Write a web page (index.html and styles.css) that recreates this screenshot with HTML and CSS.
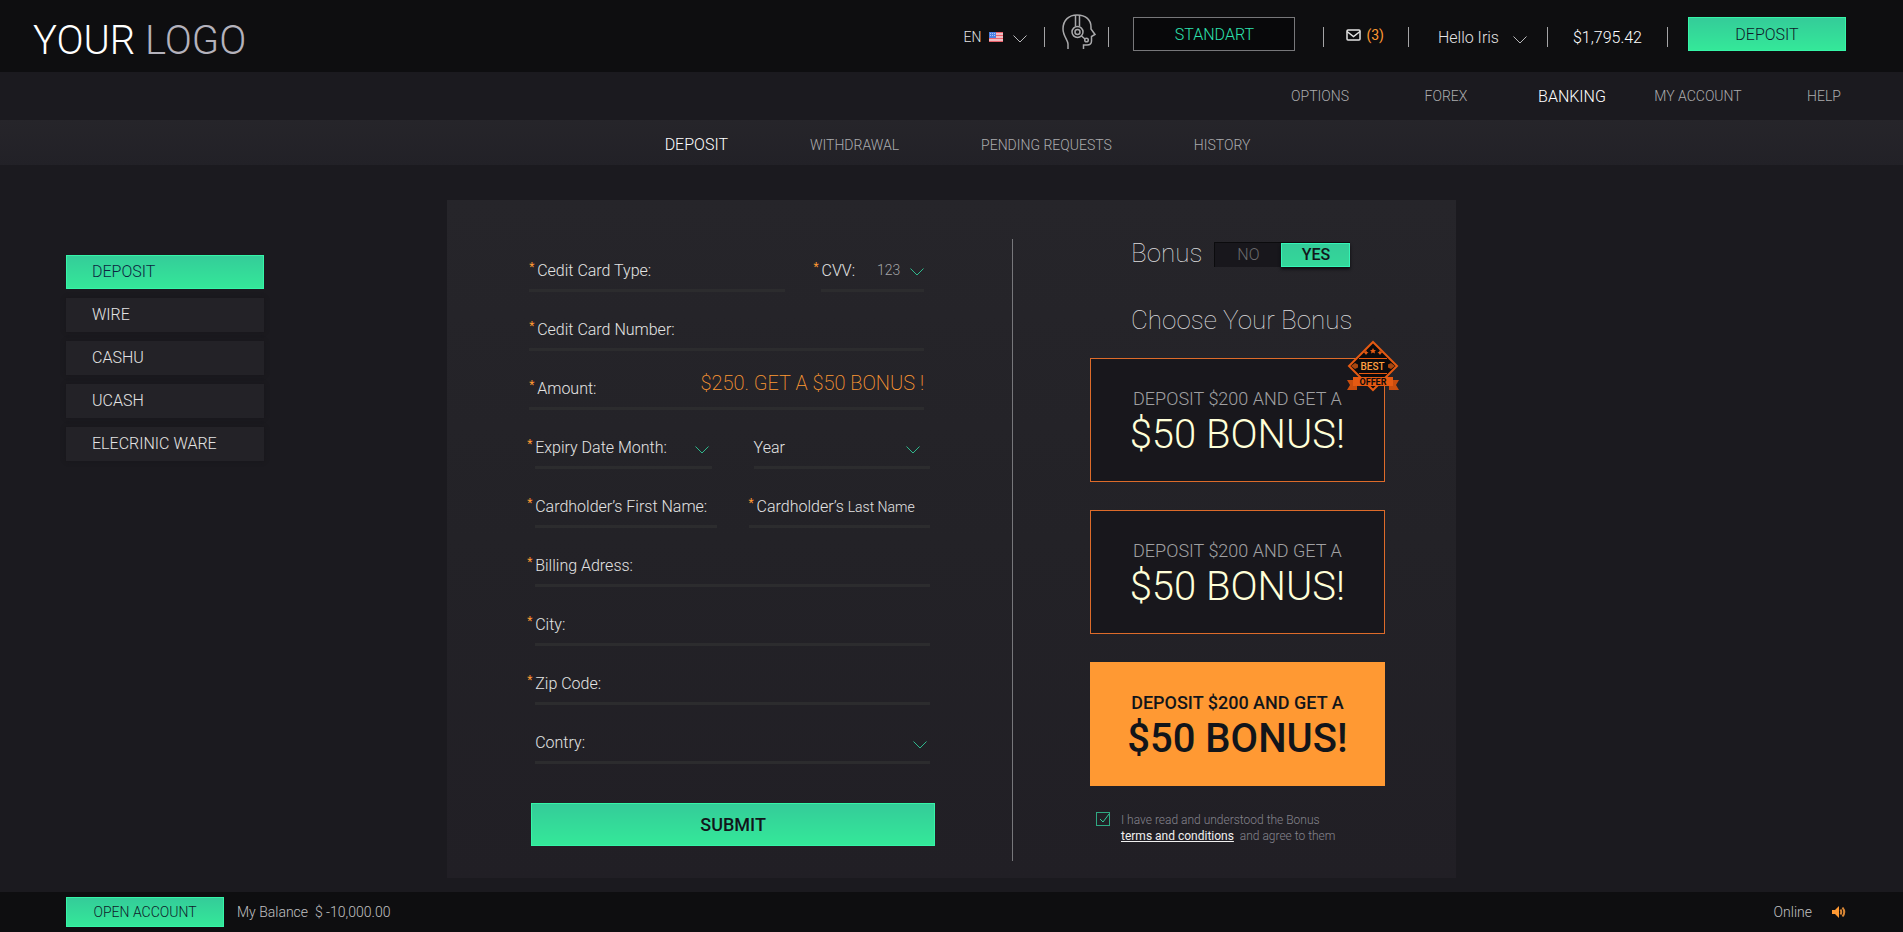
FILE: index.html
```html
<!DOCTYPE html>
<html lang="en">
<head>
    <meta charset="UTF-8">
    <meta name="viewport" content="width=device-width, initial-scale=1.0">
    <title>Banking - Deposit</title>
    <link rel="stylesheet" href="styles.css">
</head>
<body>
    <header class="top-bar">
        <a href="#" class="logo">YOUR <span>LOGO</span></a>
        <div class="top-actions">
            <button type="button" class="lang">
                EN
                <svg class="flag" viewBox="0 0 14 10" width="14" height="10">
                    <rect width="14" height="10" fill="#f3d9dc"/>
                    <path d="M0 .5h14M0 3.5h14M0 6.5h14M0 9.5h14" stroke="#e8606a" stroke-width="1.5"/>
                    <rect width="7" height="6" fill="#4a7fe0"/>
                    <path d="M1 1.5h5M1 3.5h5" stroke="#a9c4f5" stroke-dasharray="1 1"/>
                </svg>
                <svg class="chevron" viewBox="0 0 14 8" width="14" height="8"><path d="M.5.5 7 7 13.5.5"/></svg>
            </button>
            <span class="sep"></span>
            <a href="#" class="support" aria-label="Support">
                <svg viewBox="0 0 34 36" width="34" height="36" fill="none" stroke="#a9a9ab" stroke-width="1.5">
                    <path d="M6 35V30C6 26 1 22 1 15 1 6 7 1 15 1 24 1 29 6 29 13V15L33 20.5 29.5 22.5V27C29.5 30 28 31 25 31H21.5V35"/>
                    <path d="M13.5 1V12.5M17.5 1V12.5"/>
                    <circle cx="15.5" cy="18" r="5.5"/>
                    <circle cx="15.5" cy="18" r="2.5"/>
                    <path d="M19.5 22 23 25"/>
                    <circle cx="24.5" cy="26" r="1.8"/>
                </svg>
            </a>
            <span class="sep"></span>
            <button type="button" class="account-type">STANDART</button>
            <span class="sep"></span>
            <a href="#" class="messages">
                <svg viewBox="0 0 15 12" width="15" height="12" fill="none" stroke="#e4e4e4" stroke-width="1.5">
                    <rect x="1" y="1" width="13" height="10" rx="1"/>
                    <path d="M1 2.5 7.5 7.5 14 2.5"/>
                </svg>
                (3)
            </a>
            <span class="sep"></span>
            <button type="button" class="user">
                Hello Iris
                <svg class="chevron" viewBox="0 0 14 8" width="14" height="8"><path d="M.5.5 7 7 13.5.5"/></svg>
            </button>
            <span class="sep"></span>
            <span class="balance">$1,795.42</span>
            <span class="sep"></span>
            <button type="button" class="btn btn-deposit">DEPOSIT</button>
        </div>
    </header>

    <nav class="main-nav">
        <a href="#">OPTIONS</a>
        <a href="#">FOREX</a>
        <a href="#" class="active">BANKING</a>
        <a href="#">MY ACCOUNT</a>
        <a href="#">HELP</a>
    </nav>

    <nav class="sub-nav">
        <a href="#" class="active">DEPOSIT</a>
        <a href="#">WITHDRAWAL</a>
        <a href="#">PENDING REQUESTS</a>
        <a href="#">HISTORY</a>
    </nav>

    <main class="content">
        <aside class="sidebar">
            <a href="#" class="active">DEPOSIT</a>
            <a href="#">WIRE</a>
            <a href="#">CASHU</a>
            <a href="#">UCASH</a>
            <a href="#">ELECRINIC WARE</a>
        </aside>

        <section class="panel">
            <form class="deposit-form" onsubmit="return false">
                <!-- Card -->
                <div class="card-fields">
                    <div class="row row-type">
                        <div class="field required">
                            <label for="cardType">Cedit Card Type:</label>
                            <input type="text" id="cardType">
                        </div>
                        <div class="field required hang">
                            <label for="cvv">CVV:</label>
                            <select id="cvv" class="cvv"><option>123</option></select>
                        </div>
                    </div>
                    <div class="row">
                        <div class="field required">
                            <label for="cardNumber">Cedit Card Number:</label>
                            <input type="text" id="cardNumber">
                        </div>
                    </div>
                    <div class="row">
                        <div class="field required">
                            <label for="amount">Amount:</label>
                            <input type="text" id="amount" class="amount" value="$250. GET A $50 BONUS !">
                        </div>
                    </div>
                </div>

                <!-- Holder -->
                <div class="holder-fields">
                    <div class="row row-expiry">
                        <div class="field required hang">
                            <label for="month">Expiry Date Month:</label>
                            <select id="month"><option></option></select>
                        </div>
                        <div class="field">
                            <label for="year">Year</label>
                            <select id="year" class="year"><option></option></select>
                        </div>
                    </div>
                    <div class="row row-name">
                        <div class="field required hang">
                            <label for="firstName">Cardholder’s First Name:</label>
                            <input type="text" id="firstName">
                        </div>
                        <div class="field required">
                            <label for="lastName">Cardholder’s <small>Last Name</small></label>
                            <input type="text" id="lastName">
                        </div>
                    </div>
                    <div class="row">
                        <div class="field required hang">
                            <label for="address">Billing Adress:</label>
                            <input type="text" id="address">
                        </div>
                    </div>
                    <div class="row">
                        <div class="field required hang">
                            <label for="city">City:</label>
                            <input type="text" id="city">
                        </div>
                    </div>
                    <div class="row">
                        <div class="field required hang">
                            <label for="zip">Zip Code:</label>
                            <input type="text" id="zip">
                        </div>
                    </div>
                    <div class="row">
                        <div class="field">
                            <label for="country">Contry:</label>
                            <select id="country"><option></option></select>
                        </div>
                    </div>
                </div>

                <button type="submit" class="btn btn-submit">SUBMIT</button>
            </form>

            <div class="bonus">
                <div class="bonus-switch">
                    <h2>Bonus</h2>
                    <div class="toggle">
                        <input type="radio" name="bonus" id="bonusNo"><label for="bonusNo">NO</label>
                        <input type="radio" name="bonus" id="bonusYes" checked><label for="bonusYes">YES</label>
                    </div>
                </div>
                <h2>Choose Your Bonus</h2>
                <div class="bonus-list">
                    <button type="button" class="bonus-card">
                        <span>DEPOSIT $200 AND GET A</span>
                        <strong>$50 BONUS!</strong>
                        <svg class="badge" viewBox="0 0 54 52" width="54" height="52">
                            <path d="M27 2 51 26 27 50 3 26Z" fill="#0b0a0c" stroke="#e55a12" stroke-width="2"/>
                            <path d="M13 18.5H41M13 33.5H41" stroke="#e55a12"/>
                            <path d="M27 8l1 2h2l-1.5 1.5.5 2-2-1-2 1 .5-2L24 10h2ZM20 10l1 2 1.5.5-1.5 1-1 1.5-1-1.5-1.5-1L19 12ZM34 10l1 2 1.5.5-1.5 1-1 1.5-1-1.5-1.5-1L33 12Z" fill="#e55a12"/>
                            <path d="M5 26l4-3 3 1.5v3L9 29ZM49 26l-4-3-3 1.5v3L45 29Z" fill="#a8460f"/>
                            <path d="M1 40H11V50H1L4 45ZM53 40H43V50H53L50 45Z" fill="#c94d0e"/>
                            <path d="M7 37H47V46H7Z" fill="#e55a12"/>
                            <text x="26.5" y="30" class="badge-best">BEST</text>
                            <text x="27" y="45" class="badge-offer">OFFER</text>
                        </svg>
                    </button>
                    <button type="button" class="bonus-card">
                        <span>DEPOSIT $200 AND GET A</span>
                        <strong>$50 BONUS!</strong>
                    </button>
                    <button type="button" class="bonus-card selected">
                        <span>DEPOSIT $200 AND GET A</span>
                        <strong>$50 BONUS!</strong>
                    </button>
                </div>
                <div class="terms">
                    <input type="checkbox" id="terms" checked>
                    <label for="terms">I have read and understood the Bonus<br><a href="#">terms and conditions</a>&nbsp; and agree to them</label>
                </div>
            </div>
        </section>
    </main>

    <footer class="bottom-bar">
        <button type="button" class="btn btn-open">OPEN ACCOUNT</button>
        <span>My Balance&nbsp; $ -10,000.00</span>
        <div class="status">
            Online
            <svg viewBox="0 0 14 12" width="14" height="12">
                <path d="M0 4H3L7 0V12L3 8H0Z" fill="#ff9933"/>
                <path d="M8.5 3.500Q10 6 8.5 8.500M10.5 1.500Q14 6 10.5 10.500" fill="none" stroke="#d98736" stroke-width="2"/>
            </svg>
        </div>
    </footer>
</body>
</html>
```

FILE: styles.css
```css
* {
    box-sizing: border-box;
}
body {
    font-family: Roboto, "Liberation Sans", sans-serif;
    font-size: 16px;
    font-weight: 300;
    margin: 0;
    min-height: 100vh;
    display: flex;
    flex-direction: column;
    background-color: #1b1a1f;
    color: #e4e4e4;
}
a {
    color: inherit;
    text-decoration: none;
}
button, input, select {
    font: inherit;
    color: inherit;
    background: none;
    border: none;
    padding: 0;
    outline: none;
}
button {
    cursor: pointer;
}
h2 {
    margin: 0;
    font-size: 26px;
    line-height: 32px;
    font-weight: 100;
    color: #dcdcde;
}
.btn {
    background: linear-gradient(#34cc99, #34e899);
    border: 1px solid #35f5a8;
    color: #0f1a2a;
}

/* Top bar */
.top-bar {
    display: flex;
    justify-content: space-between;
    align-items: flex-start;
    min-height: 72px;
    padding: 17px 57px 0 33px;
    background-color: #0e0e10;
}
.logo {
    font-size: 40px;
    line-height: 48px;
    color: #fff;
}
.logo span {
    color: #b4b2bc;
}
.top-actions {
    display: flex;
    align-items: center;
    height: 34px;
}
.sep {
    width: 1px;
    height: 20px;
    margin-top: 6px;
    background-color: #a4a4a6;
}
.chevron {
    fill: none;
    stroke: #b8b8ba;
}
.lang, .user, .balance {
    display: flex;
    align-items: center;
    padding-top: 6px;
}
.lang {
    margin-right: 17px;
    font-size: 14px;
}
.flag {
    margin: 0 10px 0 8px;
}
.lang .chevron {
    margin-top: 3px;
}
.support {
    margin: 0 12px 0 17px;
    padding-bottom: 4px;
}
.support svg {
    display: block;
}
.account-type {
    width: 162px;
    height: 34px;
    margin: 0 28px 0 24px;
    background-color: #08080a;
    border: 1px solid #77777a;
    color: #2de3b0;
}
.messages {
    display: flex;
    align-items: center;
    gap: 5px;
    margin: 0 24px 0 22px;
    padding-top: 2px;
    font-size: 14px;
    font-weight: 400;
    color: #ff9933;
}
.user {
    margin: 0 20px 0 29px;
}
.user .chevron {
    margin: 6px 0 0 14px;
}
.balance {
    margin: 0 25px;
    color: #fff;
}
.btn-deposit {
    width: 158px;
    height: 34px;
    margin-left: 20px;
}

/* Navigation */
.main-nav {
    display: grid;
    grid-template-columns: repeat(5, 126px);
    justify-content: end;
    align-items: center;
    height: 48px;
    padding-right: 16px;
    text-align: center;
    font-size: 14px;
    color: #acacae;
}
.main-nav .active, .sub-nav .active {
    font-size: 16px;
    color: #fff;
}
.sub-nav {
    display: flex;
    justify-content: center;
    align-items: center;
    gap: 82px;
    height: 45px;
    padding: 4px 0 0 12px;
    background: linear-gradient(#26252a, #222127);
    font-size: 14px;
    color: #acacae;
}

/* Content */
.content {
    flex: 1;
    display: grid;
    grid-template-columns: 1fr 53% 1fr;
    align-items: start;
    padding: 35px 0 14px;
}
.sidebar {
    display: flex;
    flex-direction: column;
    gap: 9px;
    width: 198px;
    margin: 55px 0 0 66px;
}
.sidebar a {
    padding: 0 26px;
    line-height: 34px;
    background-color: #232227;
    box-shadow: 0 0 4px #17161b;
}
.sidebar .active {
    background: linear-gradient(#34cc99, #34e899);
    box-shadow: inset 0 0 0 1px #35f5a8;
    color: #0c2440;
}
.panel {
    display: grid;
    grid-template-columns: 56% 44%;
    background: linear-gradient(#26252a, #232227 50%, #211f25);
}

/* Deposit form */
.deposit-form {
    padding: 33px 79px 32px 82px;
}
.card-fields {
    margin-right: 9px;
}
.holder-fields {
    margin: 0 3px 0 6px;
}
.row {
    display: grid;
    height: 59px;
}
.row-type {
    grid-template-columns: 5fr 2fr;
    gap: 36px;
}
.row-expiry {
    grid-template-columns: 1fr 1fr;
    gap: 42px;
}
.row-name {
    grid-template-columns: 1fr 1fr;
    gap: 32px;
}
.field {
    display: flex;
    align-items: center;
    min-width: 0;
    padding-top: 18px;
    border-bottom: 3px solid #2c2c2e;
}
.field label {
    white-space: nowrap;
}
.field small {
    font-size: 14px;
}
.required label::before {
    content: "*";
    display: inline-block;
    width: 8px;
    font-size: 12px;
    line-height: 12px;
    font-weight: 400;
    vertical-align: 5px;
    color: #ff9933;
}
.hang label {
    margin-left: -8px;
}
.field input, .field select {
    flex: 1;
    width: 0;
    min-width: 0;
    height: 32px;
}
.field select {
    appearance: none;
    background: url("data:image/svg+xml,%3Csvg xmlns='http://www.w3.org/2000/svg' width='14' height='8' fill='none' stroke='%232fb98d'%3E%3Cpath d='M.5.5 7 7 13.5.5'/%3E%3C/svg%3E") no-repeat right 3px top 15px;
}
.field .year {
    background-position: right 10px top 15px;
}
.field .cvv {
    padding-left: 22px;
    background-position: right 0 top 14px;
    font-size: 14px;
    color: #a4a4a7;
}
.field .amount {
    align-self: flex-start;
    height: 28px;
    text-align: right;
    font-size: 20px;
    font-weight: 200;
    color: #ff9933;
}
.btn-submit {
    width: 100%;
    height: 43px;
    margin: 39px 0 0 2px;
    font-size: 18px;
    font-weight: 500;
    color: #12151a;
}

/* Bonus */
.bonus {
    margin: 39px 0 17px;
    padding: 0 71px 0 77px;
    border-left: 1px solid #77777b;
}
.bonus h2 {
    padding-left: 41px;
}
.bonus-switch {
    display: flex;
    align-items: flex-start;
    gap: 12px;
    height: 65px;
}
.bonus-switch h2 {
    line-height: 28px;
}
.toggle {
    display: flex;
    margin-top: 3px;
    background-color: #18171c;
    border-top: 1px solid #0b0b0d;
    border-left: 1px solid #0b0b0d;
    text-align: center;
    line-height: 24px;
    color: #6b6b6e;
}
.toggle input {
    appearance: none;
    width: 0;
    margin: 0;
}
.toggle label {
    width: 66px;
}
.toggle input:checked + label {
    width: 69px;
    background: linear-gradient(#34cc99, #34d899);
    box-shadow: inset 0 0 0 1px #35f5b8, 0 2px 3px #0b0b0d;
    font-weight: 500;
    color: #12151a;
}
.bonus-list {
    display: flex;
    flex-direction: column;
    gap: 28px;
    margin-top: 22px;
}
.bonus-card {
    position: relative;
    display: flex;
    flex-direction: column;
    justify-content: center;
    align-items: center;
    height: 124px;
    padding-top: 6px;
    background-color: #18171c;
    border: 1px solid #dd6b2a;
    color: #a0a0a2;
}
.bonus-card span {
    font-size: 18px;
    line-height: 24px;
}
.bonus-card strong {
    font-size: 40px;
    line-height: 48px;
    font-weight: 300;
    color: #ffffd8;
}
.bonus-card.selected {
    background-color: #ff9933;
    border-color: #ff9933;
    color: #12151a;
}
.selected span, .bonus-card.selected strong {
    font-weight: 500;
    color: #12151a;
}
.badge {
    position: absolute;
    top: -19px;
    right: -16px;
}
.badge text {
    text-anchor: middle;
    font-weight: 500;
}
.badge .badge-best {
    font-size: 10px;
    fill: #ffa040;
}
.badge .badge-offer {
    font-size: 9px;
    font-weight: 700;
    fill: #0b0a0c;
}
.terms {
    display: flex;
    gap: 11px;
    margin: 26px 0 0 6px;
    font-size: 12px;
    line-height: 16px;
    color: #85848d;
}
.terms input {
    appearance: none;
    width: 14px;
    height: 14px;
    margin: 0;
    flex: none;
    border: 1px solid #2fa882;
    background: url("data:image/svg+xml,%3Csvg xmlns='http://www.w3.org/2000/svg' width='12' height='12' fill='none' stroke='%2334cc99'%3E%3Cpath d='M3 6 6 9 12 1'/%3E%3C/svg%3E") no-repeat;
}
.terms a {
    font-weight: 400;
    color: #f0f0f0;
    text-decoration: underline;
}

/* Footer */
.bottom-bar {
    display: flex;
    align-items: center;
    gap: 13px;
    height: 40px;
    padding: 0 57px 0 66px;
    background-color: #0e0e10;
    font-size: 14px;
    color: #c0c0c2;
}
.btn-open {
    width: 158px;
    height: 30px;
}
.status {
    display: flex;
    align-items: center;
    gap: 20px;
    margin-left: auto;
}
```
